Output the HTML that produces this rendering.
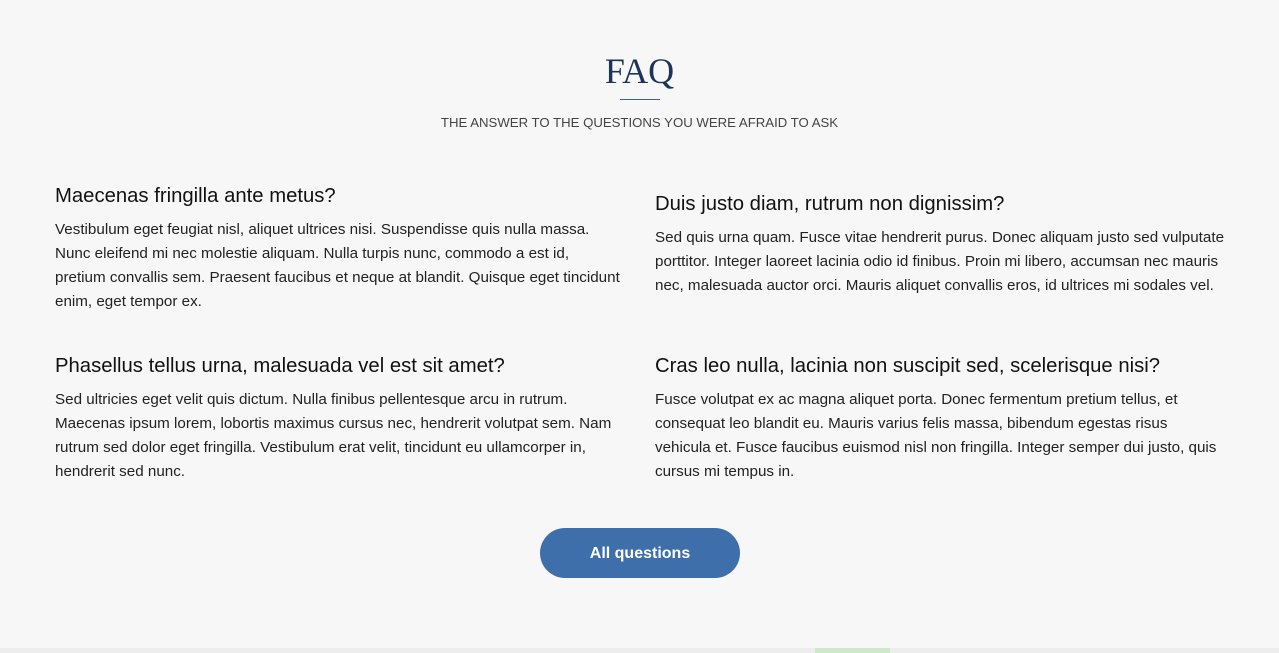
<!DOCTYPE html>
<html><head><style>
body{margin:0;width:1279px;height:653px;background:#f8f7f8;font-family:"Liberation Sans",sans-serif;position:relative;overflow:hidden;color:#222}
h1{position:absolute;top:50px;left:0;width:1279px;text-align:center;margin:0;font-family:"Liberation Serif",serif;font-weight:normal;font-size:36px;color:#1c3557}
.line{position:absolute;left:620px;top:99px;width:40px;height:1px;background:#2f64b0}
.sub{position:absolute;top:115px;width:1279px;text-align:center;font-size:13.2px;color:#444}
.q{position:absolute;width:572px;white-space:nowrap}
.q h3{margin:0 0 10px;font-size:20.3px;font-weight:normal;color:#111}
.q p{margin:0;font-size:15.2px;line-height:24px;color:#222}
.btn{position:absolute;left:540px;top:528px;width:200px;height:50px;border-radius:25px;background:#3f6fab;color:#fff;font-size:16px;font-weight:bold;text-align:center;line-height:51px}
.map{position:absolute;left:0;top:648px;width:1279px;height:5px;background:#eeeded}
</style></head><body>
<h1>FAQ</h1><div class="line"></div>
<div class="sub">THE ANSWER TO THE QUESTIONS YOU WERE AFRAID TO ASK</div>
<div class="q" style="left:55px;top:185px"><h3>Maecenas fringilla ante metus?</h3><p>Vestibulum eget feugiat nisl, aliquet ultrices nisi. Suspendisse quis nulla massa.<br>Nunc eleifend mi nec molestie aliquam. Nulla turpis nunc, commodo a est id,<br>pretium convallis sem. Praesent faucibus et neque at blandit. Quisque eget tincidunt<br>enim, eget tempor ex.</p></div>
<div class="q" style="left:655px;top:193px"><h3>Duis justo diam, rutrum non dignissim?</h3><p>Sed quis urna quam. Fusce vitae hendrerit purus. Donec aliquam justo sed vulputate<br>porttitor. Integer laoreet lacinia odio id finibus. Proin mi libero, accumsan nec mauris<br>nec, malesuada auctor orci. Mauris aliquet convallis eros, id ultrices mi sodales vel.</p></div>
<div class="q" style="left:55px;top:355px"><h3>Phasellus tellus urna, malesuada vel est sit amet?</h3><p>Sed ultricies eget velit quis dictum. Nulla finibus pellentesque arcu in rutrum.<br>Maecenas ipsum lorem, lobortis maximus cursus nec, hendrerit volutpat sem. Nam<br>rutrum sed dolor eget fringilla. Vestibulum erat velit, tincidunt eu ullamcorper in,<br>hendrerit sed nunc.</p></div>
<div class="q" style="left:655px;top:355px"><h3>Cras leo nulla, lacinia non suscipit sed, scelerisque nisi?</h3><p>Fusce volutpat ex ac magna aliquet porta. Donec fermentum pretium tellus, et<br>consequat leo blandit eu. Mauris varius felis massa, bibendum egestas risus<br>vehicula et. Fusce faucibus euismod nisl non fringilla. Integer semper dui justo, quis<br>cursus mi tempus in.</p></div>
<div class="btn">All questions</div>
<div class="map"><div style="position:absolute;left:815px;width:75px;height:5px;background:#cdeac8"></div></div>
</body></html>
